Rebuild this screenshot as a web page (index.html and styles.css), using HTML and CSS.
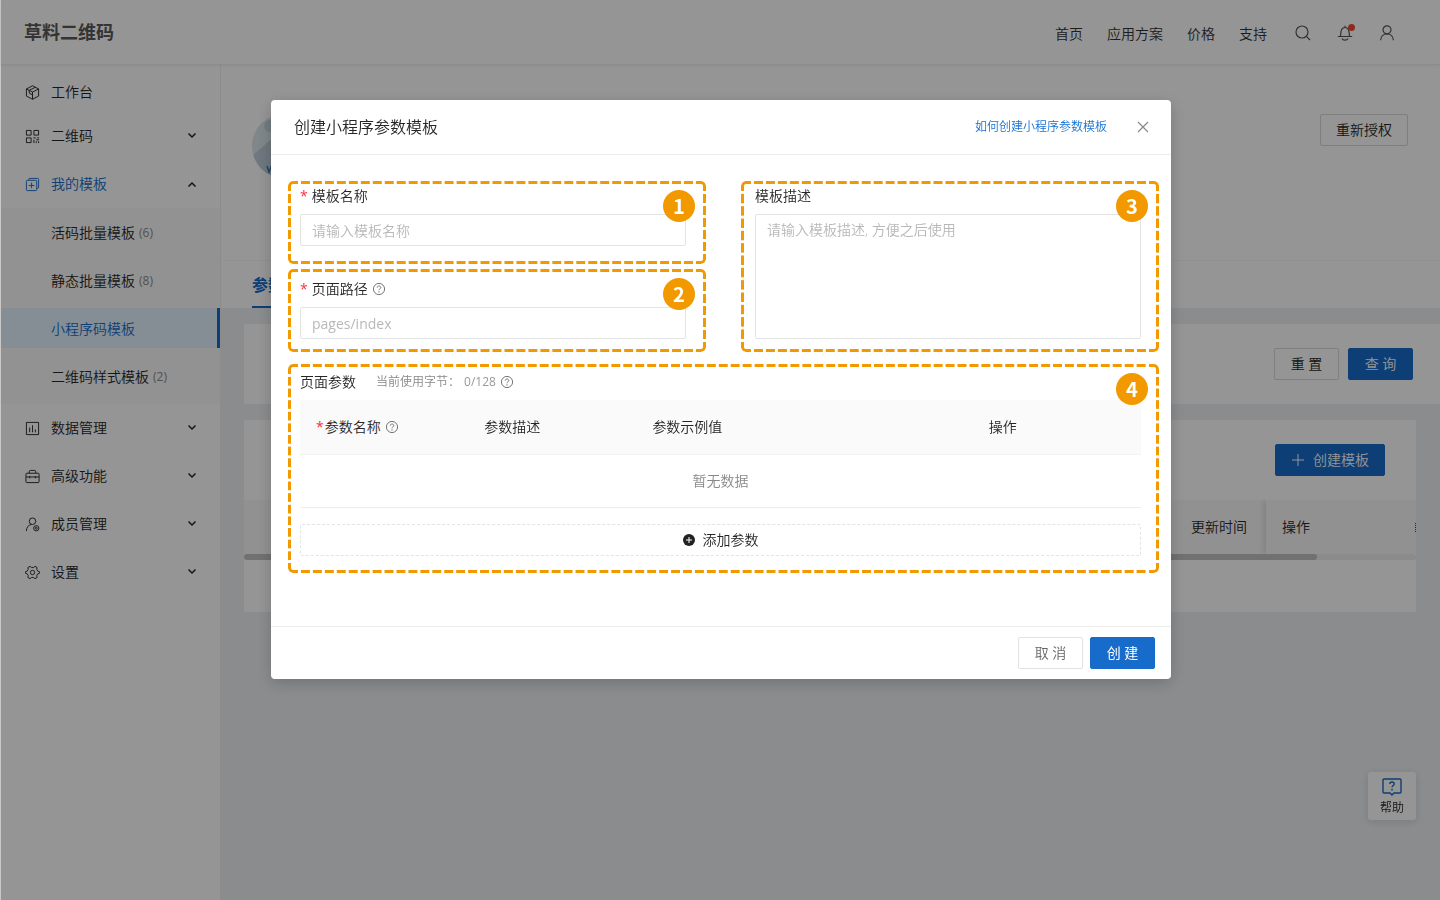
FILE: index.html
```html
<!DOCTYPE html>
<html lang="zh-CN">
<head>
<meta charset="utf-8">
<meta name="viewport" content="width=device-width, initial-scale=1">
<title>草料二维码</title>
<link rel="stylesheet" href="styles.css">
</head>
<body>
<svg class="defs" aria-hidden="true">
  <symbol id="i-chevron" viewBox="0 0 10 10"><path d="M1.500 2.500l3.500 3.500L8.500 2.500" fill="none" stroke="currentColor" stroke-width="1.500"/></symbol>
  <symbol id="i-help" viewBox="0 0 14 14"><g fill="none" stroke="currentColor"><circle cx="7" cy="7" r="5.600"/><path d="M5.200 5.700c0-1 .8-1.700 1.800-1.700s1.800.7 1.800 1.600c0 1.200-1.800 1.200-1.800 2.600"/></g><circle cx="7" cy="9.900" r=".7" fill="currentColor"/></symbol>
</svg>

<div class="app">
  <header class="topbar">
    <div class="logo">草料二维码</div>
    <nav class="topnav">
      <a href="#">首页</a>
      <a href="#">应用方案</a>
      <a href="#">价格</a>
      <a href="#">支持</a>
    </nav>
    <div class="tools">
      <button class="tool" aria-label="搜索"><svg viewBox="0 0 16 16"><circle cx="7" cy="7" r="6"/><path d="M11.300 11.300L15 15"/></svg></button>
      <button class="tool" aria-label="通知"><svg viewBox="0 0 16 16"><path d="M.8 11.500h14.400M3.200 11.500C4 10 3.600 8.500 4 6.500 4.500 4.200 6 2.500 8 2.500s3.500 1.700 4 4c.4 2 0 3.500.8 5M8 2.400V.8M5 13.500c.8 2.200 5.200 2.200 6 0"/></svg><i class="dot"></i></button>
      <button class="tool" aria-label="账户"><svg viewBox="0 0 16 16"><circle cx="8" cy="4.800" r="4"/><path d="M1.600 15.200c.2-3.800 2.800-6.400 6.400-6.400s6.200 2.600 6.400 6.400"/></svg></button>
    </div>
  </header>

  <div class="shell">
    <aside class="sidebar">
      <ul class="menu">
        <li><a class="item item-tight" href="#"><svg class="ico" viewBox="0 0 16 16"><path d="M8 .8l6.500 3.400v7.600L8 15.200l-6.500-3.400V4.200zM1.500 4.200L8 7.500l6.500-3.300M8 7.500v7.700M4.500 5.700L11 2.400M4.500 5.700v3l3.500 1.800"/></svg>工作台</a></li>
        <li><a class="item" href="#"><svg class="ico" viewBox="0 0 16 16"><path d="M1.500 1.500h5v5h-5zM9.500 1.500h5v5h-5zM1.500 9.500h5v5h-5zM9 9.500h2.500M13 9.500h2M9.500 11.500v3.500M12 11.500h3M12 13v2M14.500 13v2"/></svg>二维码<svg class="arrow"><use href="#i-chevron"/></svg></a></li>
        <li><a class="item is-open" href="#"><svg class="ico" viewBox="0 0 16 16"><path d="M2.500 3.500h9a1 1 0 0 1 1 1v9a1 1 0 0 1-1 1h-9a1 1 0 0 1-1-1v-9a1 1 0 0 1 1-1zM4 3.500v-1a1 1 0 0 1 1-1h8.500a1 1 0 0 1 1 1V11a1 1 0 0 1-1 1h-1M7 6v6M4 9h6"/></svg>我的模板<svg class="arrow up"><use href="#i-chevron"/></svg></a>
          <ul class="submenu">
            <li><a class="item" href="#">活码批量模板<span class="count">(6)</span></a></li>
            <li><a class="item" href="#">静态批量模板<span class="count">(8)</span></a></li>
            <li><a class="item is-current" href="#">小程序码模板</a></li>
            <li><a class="item" href="#">二维码样式模板<span class="count">(2)</span></a></li>
          </ul>
        </li>
        <li><a class="item" href="#"><svg class="ico" viewBox="0 0 16 16"><path d="M1.500 1.500h13v13h-13zM5 7v5M8 4.500V12M11 9v3"/></svg>数据管理<svg class="arrow"><use href="#i-chevron"/></svg></a></li>
        <li><a class="item" href="#"><svg class="ico" viewBox="0 0 16 16"><path d="M2 4.500h12a1 1 0 0 1 1 1v8a1 1 0 0 1-1 1H2a1 1 0 0 1-1-1v-8a1 1 0 0 1 1-1zM4.500 4.500V3q0-1.500 1.500-1.500h4q1.500 0 1.500 1.500v1.500M1 8.500h14M5 7.500v2.500M11 7.500v2.500"/></svg>高级功能<svg class="arrow"><use href="#i-chevron"/></svg></a></li>
        <li><a class="item" href="#"><svg class="ico" viewBox="0 0 16 16"><circle cx="8" cy="4.500" r="3.500"/><path d="M1.500 15c0-4 2-6.500 5.500-7"/><circle cx="12" cy="12" r="2.800"/><circle cx="12" cy="12" r="1"/></svg>成员管理<svg class="arrow"><use href="#i-chevron"/></svg></a></li>
        <li><a class="item" href="#"><svg class="ico" viewBox="0 0 16 16"><circle cx="8" cy="8" r="2.300"/><path d="M5.300 1.400L7 2.700h2l1.700-1.300 2.200 1.300-.3 2.100 1 1.700 2 .8v1.400l-2 .8-1 1.700.3 2.100-2.200 1.300L9 13.300H7l-1.700 1.300-2.200-1.300.3-2.100-1-1.700-2-.8V7.300l2-.8 1-1.700-.3-2.100z"/></svg>设置<svg class="arrow"><use href="#i-chevron"/></svg></a></li>
      </ul>
    </aside>

    <main class="content">
      <section class="profile">
        <div class="profile-row">
          <svg class="avatar" viewBox="0 0 64 64" aria-hidden="true"><defs><clipPath id="round"><circle cx="32" cy="32" r="32"/></clipPath></defs><g clip-path="url(#round)"><rect width="64" height="64" fill="#dbe6eb"/><path d="M0 42L32 14l32 30v20H0z" fill="#bccdd8"/><circle cx="18" cy="12" r="6" fill="#c3d3dc"/><path d="M15 52l2 6 2-5 2 5 2-6" fill="none" stroke="#3d78b0" stroke-width="1.500"/></g></svg>
          <button class="btn">重新授权</button>
        </div>
        <div class="tabs"><a class="tab" href="#">参数</a></div>
      </section>
      <section class="filter">
        <button class="btn btn-pair">重 置</button>
        <button class="btn btn-pair btn-primary">查 询</button>
      </section>
      <section class="list">
        <div class="list-bar"><button class="btn btn-primary btn-icon"><svg viewBox="0 0 14 14"><path d="M7 1v12M1 7h12"/></svg>创建模板</button></div>
        <div class="list-head"><span class="cell">更新时间</span><span class="cell cell-fixed">操作</span><span class="more"></span></div>
        <div class="scrollbar"><div class="thumb"></div></div>
      </section>
    </main>
  </div>
  <button class="help"><svg viewBox="0 0 20 18"><path d="M2 1h16a1 1 0 0 1 1 1v12a1 1 0 0 1-1 1h-6l-2 2-2-2H2a1 1 0 0 1-1-1V2a1 1 0 0 1 1-1z"/><path d="M7.800 6c0-1.300 1-2 2.200-2s2.200.7 2.200 1.900c0 1.500-2.200 1.600-2.200 3.300M10 10.800v1.600"/></svg>帮助</button>
</div>

<div class="mask">
  <div class="modal" role="dialog" aria-labelledby="dialog-title">
    <header class="modal-head">
      <h1 id="dialog-title">创建小程序参数模板</h1>
      <a class="guide" href="#">如何创建小程序参数模板</a>
      <button class="close" aria-label="关闭"><svg viewBox="0 0 12 12"><path d="M1 1l10 10M11 1L1 11"/></svg></button>
    </header>
    <form class="modal-body">
      <div class="col">
        <div class="group group-name">
          <label class="label" for="name"><span class="req">*</span>模板名称</label>
          <input class="field" id="name" type="text" placeholder="请输入模板名称">
          <span class="outline"></span><span class="badge">1</span>
        </div>
        <div class="group group-path">
          <label class="label" for="path"><span class="req">*</span>页面路径<svg class="tip"><use href="#i-help"/></svg></label>
          <input class="field field-latin" id="path" type="text" placeholder="pages/index">
          <span class="outline"></span><span class="badge">2</span>
        </div>
      </div>
      <div class="group group-desc">
        <label class="label" for="desc">模板描述</label>
        <textarea class="field area" id="desc" placeholder="请输入模板描述, 方便之后使用"></textarea>
        <span class="outline"></span><span class="badge">3</span>
      </div>
      <div class="group group-params">
        <div class="label">页面参数<span class="usage">当前使用字节：</span><span class="bytes">0/128</span><svg class="tip"><use href="#i-help"/></svg></div>
        <table class="params">
          <colgroup><col class="c1"><col class="c1"><col class="c2"><col class="c1"></colgroup>
          <thead><tr><th><span class="req req-tight">*</span>参数名称<svg class="tip"><use href="#i-help"/></svg></th><th>参数描述</th><th>参数示例值</th><th>操作</th></tr></thead>
          <tbody><tr><td colspan="4">暂无数据</td></tr></tbody>
        </table>
        <button class="add" type="button"><svg viewBox="0 0 12 12"><circle cx="6" cy="6" r="6" fill="#222"/><path d="M6 3v6M3 6h6" stroke="#fff"/></svg>添加参数</button>
        <span class="outline"></span><span class="badge">4</span>
      </div>
    </form>
    <footer class="modal-foot">
      <button class="btn btn-pair btn-muted">取 消</button>
      <button class="btn btn-pair btn-primary btn-strong">创 建</button>
    </footer>
  </div>
</div>
</body>
</html>
```
FILE: styles.css
```css
:root {
  --blue: #176bca;
  --orange: #f29900;
  --text: #262626;
  --line: #e4e4e4;
}

* { box-sizing: border-box; }

body {
  margin: 0;
  font: 350 14px/22px "Open Sans", "Noto Sans CJK SC", sans-serif;
  color: var(--text);
  background: #edf0f3;
}

ul { margin: 0; padding: 0; list-style: none; }
a { color: inherit; text-decoration: none; }
button, input, textarea { font: inherit; color: inherit; }
button { cursor: pointer; }
.defs { position: absolute; width: 0; height: 0; }

.app {
  display: flex;
  flex-direction: column;
  min-height: 100vh;
  border-left: 1px solid #c8c8c8;
}

/* Top bar */
.topbar {
  display: flex;
  align-items: center;
  height: 65px;
  padding: 0 45px 0 23px;
  background: #fff;
  border-bottom: 1px solid #f0f0f0;
  box-shadow: 0 1px 3px rgba(0, 0, 0, .05);
  z-index: 1;
}
.logo { flex: 1; font-size: 18px; font-weight: 700; color: #595959; }
.topnav { display: flex; gap: 24px; padding-top: 4px; color: #333; }
.tools { display: flex; gap: 26px; margin-left: 28px; padding-top: 2px; }
.tool {
  position: relative;
  display: flex;
  width: 16px;
  height: 16px;
  padding: 0;
  border: 0;
  background: none;
}
.tool svg { width: 16px; height: 16px; fill: none; stroke: #555; stroke-width: 1.2; }
.dot {
  position: absolute;
  top: -1px;
  right: -2px;
  width: 7px;
  height: 7px;
  border-radius: 50%;
  background: #f04a32;
}

/* Sidebar */
.shell { display: flex; flex: 1; }
.sidebar {
  flex: none;
  width: 220px;
  padding-top: 3px;
  background: #fff;
  border-right: 1px solid #efefef;
}
.menu, .menu li { display: flex; flex-direction: column; }
.item {
  display: flex;
  align-items: center;
  height: 40px;
  margin: 4px 0;
  padding: 0 23px 0 24px;
}
.item-tight { margin-bottom: 0; }
.is-open { color: var(--blue); }
.ico {
  width: 15px;
  height: 15px;
  margin-right: 11px;
  fill: none;
  stroke: currentColor;
  stroke-width: 1;
}
.arrow { width: 10px; height: 10px; margin-left: auto; color: #222; }
.up { transform: rotate(180deg); }
.submenu { padding-bottom: 4px; background: #fafafa; }
.submenu .item { padding: 2px 0 0 50px; }
.submenu .is-current {
  color: var(--blue);
  background: #e6f4ff;
  border-right: 3px solid var(--blue);
}
.count { margin-left: 4px; font-size: 12px; font-weight: 400; color: #8c8c8c; }

/* Buttons */
.btn {
  height: 32px;
  padding: 0 15px;
  border: 1px solid #d9d9d9;
  border-radius: 2px;
  background: #fff;
}
.btn-pair { min-width: 65px; }
.btn-primary { border-color: var(--blue); background: var(--blue); color: #fff; }
.btn-strong { font-weight: 400; }
.btn-muted { color: #666; border-color: #e2e2e2; }
.btn-icon { display: flex; align-items: center; gap: 8px; }
.btn-icon svg { width: 14px; height: 14px; stroke: currentColor; }

/* Page behind the dialog */
.content { flex: 1; min-width: 0; }
.profile { background: #fff; }
.profile-row {
  display: flex;
  justify-content: space-between;
  align-items: flex-start;
  height: 195px;
  padding: 49px 32px 0 31px;
}
.avatar { width: 64px; height: 64px; }
.tabs { display: flex; height: 48px; padding: 0 31px; border-top: 1px solid #f8f8f8; }
.tab {
  padding-top: 13px;
  font-size: 16px;
  font-weight: 700;
  color: var(--blue);
  border-bottom: 2px solid var(--blue);
}
.filter {
  display: flex;
  justify-content: flex-end;
  gap: 9px;
  margin: 16px 0 16px 23px;
  padding: 24px 27px;
  background: #fff;
}
.list { margin: 0 24px 0 23px; padding-bottom: 52px; background: #fff; }
.list-bar { display: flex; justify-content: flex-end; padding: 24px 31px; }
.list-head {
  display: flex;
  justify-content: flex-end;
  align-items: center;
  height: 54px;
  overflow: hidden;
  background: #f9f9f9;
}
.cell { padding-right: 19px; }
.cell-fixed {
  width: 149px;
  padding: 16px;
  box-shadow: -3px 0 6px rgba(0, 0, 0, .1);
}
.more { height: 9px; border-left: 1px dotted #444; }
.scrollbar { height: 6px; border-radius: 3px; background: #eee; }
.thumb { width: calc(100% - 99px); height: 6px; border-radius: 3px; background: #c1c1c1; }

.help {
  position: fixed;
  right: 24px;
  bottom: 80px;
  display: flex;
  flex-direction: column;
  align-items: center;
  gap: 1px;
  width: 48px;
  height: 48px;
  padding: 6px 0 0;
  border: 0;
  border-radius: 3px;
  background: #fff;
  box-shadow: 0 2px 8px rgba(0, 0, 0, .12);
  font-size: 12px;
}
.help svg { flex: none; width: 20px; height: 18px; fill: none; stroke: var(--blue); stroke-width: 1.4; }

/* Dialog */
.mask {
  position: fixed;
  inset: 0 0 0 1px;
  z-index: 10;
  padding: 100px 0 0 1px;
  background: rgba(0, 0, 0, .415);
}
.modal {
  max-width: 900px;
  margin: 0 auto;
  border-radius: 4px;
  background: #fff;
  box-shadow: 0 4px 16px rgba(0, 0, 0, .2);
}
.modal-head {
  display: flex;
  align-items: center;
  height: 55px;
  padding: 0 22px 0 23px;
  border-bottom: 1px solid #ededed;
}
.modal-head h1 { flex: 1; margin: 0; font-size: 16px; font-weight: inherit; }
.guide { font-size: 12px; color: #1771d1; }
.close { display: flex; margin-left: 30px; padding: 0; border: 0; background: none; }
.close svg { width: 12px; height: 12px; stroke: #888; stroke-width: 1.2; }

.modal-body {
  display: grid;
  grid-template-columns: 1fr 1fr;
  gap: 12px 35px;
  padding: 26px 12px 53px 17px;
}
.col { display: flex; flex-direction: column; gap: 5px; }
.group { position: relative; display: flex; flex-direction: column; }
.group-name { padding: 4px 20px 18px 12px; }
.group-path { padding: 9px 20px 13px 12px; }
.group-desc { padding: 4px 18px 13px 14px; }
.group-params { grid-column: 1 / -1; padding: 7px 18px 17px 12px; }
.label { display: flex; align-items: center; margin-bottom: 7px; }
.req { margin-right: 4px; font-weight: 400; color: #ff2d3d; }
.req-tight { margin-right: 1px; }
.tip { width: 14px; height: 14px; margin-left: 4px; color: #777; vertical-align: -2px; }
.field {
  width: 100%;
  height: 32px;
  padding: 4px 11px;
  border: 1px solid var(--line);
  border-radius: 2px;
  background: #fff;
}
.field-latin { font-weight: 400; }
.field::placeholder { color: #b8b8b8; opacity: 1; }
.area { flex: 1; resize: none; }
.usage { margin-left: 20px; font-size: 12px; color: #888; }
.bytes { margin-left: 4px; font-size: 12px; font-weight: 400; color: #999; }

.params { width: 100%; border-collapse: collapse; table-layout: fixed; }
.c1 { width: 20%; }
.c2 { width: 40%; }
.params th {
  height: 54px;
  padding: 0 16px;
  background: #fafafa;
  border-bottom: 1px solid #f3f3f3;
  font-weight: inherit;
  text-align: left;
}
.params td {
  height: 53px;
  padding: 0;
  border-bottom: 1px solid #ededed;
  text-align: center;
  color: #888;
}
.add {
  display: flex;
  justify-content: center;
  align-items: center;
  gap: 8px;
  height: 32px;
  margin-top: 16px;
  border: 1px dashed var(--line);
  border-radius: 2px;
  background: #fff;
}
.add svg { width: 12px; height: 12px; }

.modal-foot {
  display: flex;
  justify-content: flex-end;
  gap: 7px;
  padding: 10px 16px;
  border-top: 1px solid #ededed;
}

/* Numbered outlines: side dashes, then top and bottom dashes, then solid corners */
.outline {
  position: absolute;
  inset: 0;
  padding: 10px 0 13px;
  pointer-events: none;
  background-image:
    linear-gradient(transparent 3px, var(--orange) 3px),
    linear-gradient(transparent 3px, var(--orange) 3px);
  background-position: 0 0, 100% 0;
  background-size: 3px 12px;
  background-repeat: no-repeat round;
  background-origin: content-box;
  background-clip: content-box;
}
.outline::before {
  content: "";
  position: absolute;
  inset: 0 13px 0 10px;
  background-image:
    linear-gradient(90deg, transparent 3px, var(--orange) 3px),
    linear-gradient(90deg, transparent 3px, var(--orange) 3px);
  background-position: 0 0, 0 100%;
  background-size: 12px 3px;
  background-repeat: round no-repeat;
}
.outline::after {
  content: "";
  position: absolute;
  inset: 0;
  border: 3px solid var(--orange);
  border-radius: 5px;
  mask:
    linear-gradient(#000 0 0) 0 0 / 10px 10px no-repeat,
    linear-gradient(#000 0 0) 100% 0 / 10px 10px no-repeat,
    linear-gradient(#000 0 0) 0 100% / 10px 10px no-repeat,
    linear-gradient(#000 0 0) 100% 100% / 10px 10px no-repeat;
}
.badge {
  position: absolute;
  top: 9px;
  right: 11px;
  width: 32px;
  height: 32px;
  border-radius: 50%;
  background: var(--orange);
  color: #fff;
  font: 700 20px/32px "Noto Sans CJK SC", sans-serif;
  text-align: center;
}
```
